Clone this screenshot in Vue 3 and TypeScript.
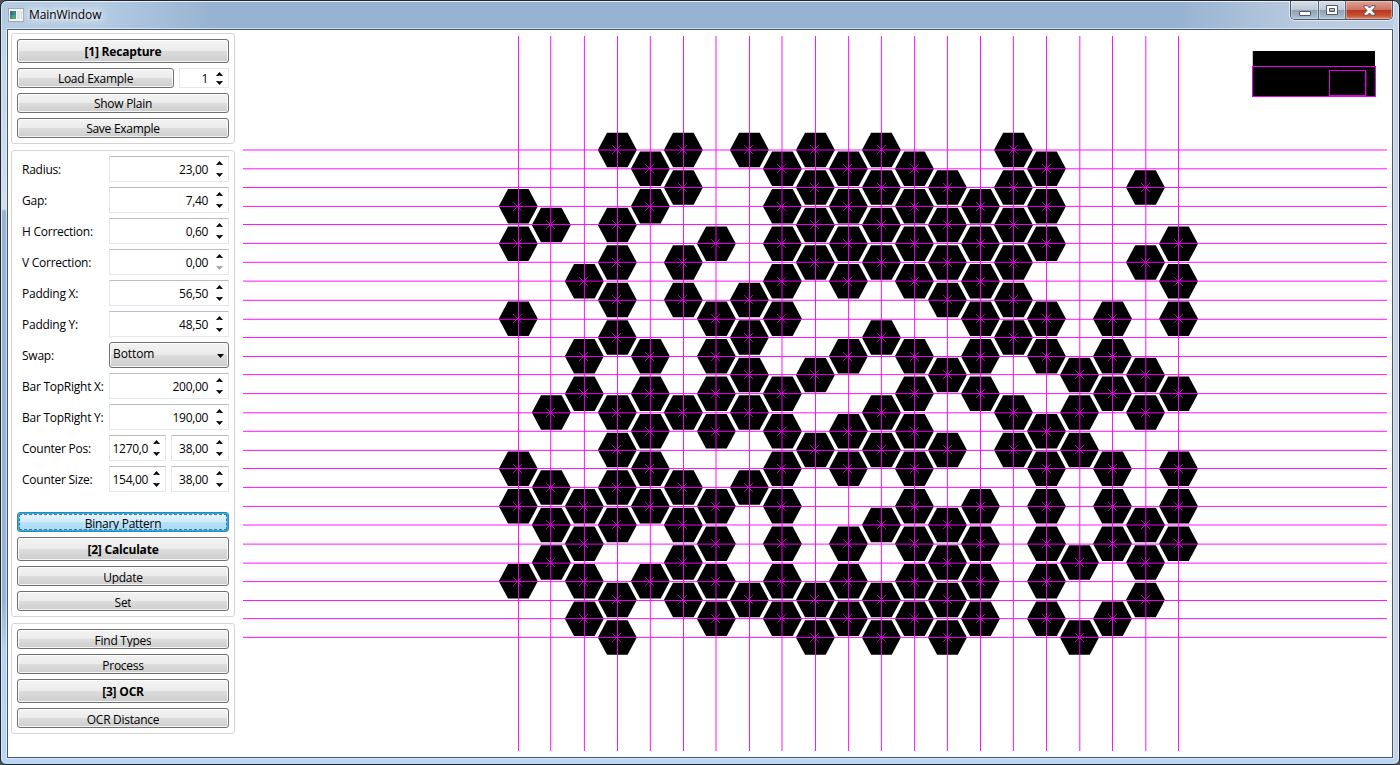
<script setup lang="ts">
interface Field {
  label: string
  values: string[]
  atMin?: boolean
  combo?: boolean
}

const fields: Field[] = [
  { label: 'Radius:', values: ['23,00'] },
  { label: 'Gap:', values: ['7,40'] },
  { label: 'H Correction:', values: ['0,60'] },
  { label: 'V Correction:', values: ['0,00'], atMin: true },
  { label: 'Padding X:', values: ['56,50'] },
  { label: 'Padding Y:', values: ['48,50'] },
  { label: 'Swap:', values: ['Bottom'], combo: true },
  { label: 'Bar TopRight X:', values: ['200,00'] },
  { label: 'Bar TopRight Y:', values: ['190,00'] },
  { label: 'Counter Pos:', values: ['1270,0', '38,00'] },
  { label: 'Counter Size:', values: ['154,00', '38,00'] },
]

// Centre of every grid line; whole numbers fall between two pixels and render soft.
const cols: number[] = [
  518.5, 550.7, 584.4, 617.5, 650.3, 683.5, 716, 749.5, 782, 815.5, 848.6,
  881.4, 914.6, 947.4, 980.5, 1013.4, 1046.5, 1079.8, 1112.5, 1145.8, 1178.5,
]
const rows: number[] = [
  150, 168.8, 187.5, 206.4, 224.5, 243.4, 262.3, 281.1, 300.3, 319.3, 337.5,
  356.5, 374.6, 393.6, 412.8, 431.3, 450.4, 468.5, 487.4, 506.4, 525, 544.1,
  563.1, 581.6, 600.5, 618.6, 637.4,
]

// Filled columns for each row of the pattern.
const filled: number[][] = [
  [3, 5, 7, 9, 11, 15],
  [4, 8, 10, 12, 16],
  [5, 9, 11, 13, 15, 19],
  [0, 4, 8, 10, 12, 14, 16],
  [1, 3, 9, 11, 13, 15],
  [0, 6, 8, 10, 12, 14, 16, 20],
  [3, 5, 9, 11, 13, 15, 19],
  [2, 8, 10, 12, 14, 20],
  [3, 5, 7, 13, 15],
  [0, 6, 8, 14, 16, 18, 20],
  [3, 7, 11, 15],
  [2, 4, 6, 10, 12, 14, 16, 18],
  [7, 9, 13, 17, 19],
  [2, 4, 6, 8, 12, 14, 18, 20],
  [1, 3, 5, 7, 11, 15, 17, 19],
  [4, 6, 8, 10, 12, 16],
  [3, 9, 11, 13, 15, 17],
  [0, 4, 8, 10, 12, 16, 18, 20],
  [1, 3, 5, 7],
  [0, 2, 4, 6, 8, 12, 14, 16, 18, 20],
  [1, 3, 5, 11, 13, 19],
  [2, 6, 8, 10, 12, 14, 16, 18, 20],
  [1, 5, 13, 17, 19],
  [0, 2, 4, 6, 8, 10, 12, 14, 16],
  [3, 5, 7, 9, 11, 13, 19],
  [2, 6, 8, 10, 12, 14, 16, 18],
  [3, 9, 11, 13, 17],
]

const cells = filled.flatMap((list, r) =>
  list.map((c) => ({ key: `${r}-${c}`, x: 518.3 + c * 33.01, y: 149.95 + r * 18.75 })),
)

function hex(x: number, y: number): string {
  const pts = [[-19.5, 0], [-10.3, -17.3], [10.3, -17.3], [19.5, 0], [10.3, 17.3], [-10.3, 17.3]]
  return pts.map(([dx, dy]) => `${(x + dx).toFixed(2)},${(y + dy).toFixed(2)}`).join(' ')
}

function cross(x: number, y: number): string {
  const cx = Math.floor(x - 0.4) + 0.5
  const cy = Math.floor(y) + 0.5
  return `M${cx - 4.5} ${cy - 4.5}l9 9M${cx + 4.5} ${cy - 4.5}l-9 9`
}
</script>

<template>
  <div class="window">
    <header class="titlebar">
      <svg class="app-icon" width="16" height="14" viewBox="0 0 16 14">
        <rect x="0.5" y="0.5" width="15" height="13" fill="#f4f4f4" stroke="#a3a9ad" />
        <rect x="2" y="3" width="6" height="8" fill="#3c8a86" />
        <rect x="2" y="3" width="3" height="4" fill="#3a6fa5" />
        <rect x="4" y="7" width="4" height="4" fill="#4ea573" />
        <rect x="9" y="3" width="3" height="8" fill="#e1e4e6" />
        <rect x="13" y="3" width="1" height="8" fill="#d0d5d8" />
      </svg>
      <span class="title">MainWindow</span>
      <div class="caption">
        <div class="cap min">
          <svg width="14" height="7" viewBox="0 0 14 7"><rect x="1.5" y="1.5" width="11" height="4" rx="0.5" fill="#fff" stroke="#535666" /></svg>
        </div>
        <div class="cap max">
          <svg width="12" height="10" viewBox="0 0 12 10"><path fill-rule="evenodd" d="M.5.5h11v9H.5zM3.500 3.500v3h5v-3z" fill="#fff" stroke="#535666" /></svg>
        </div>
        <div class="cap close">
          <svg width="13" height="11" viewBox="0 0 13 11"><path d="M1 .7h3.300L6.500 3 8.700.7H12v1.600L9 5.500l3 3.200v1.600H8.700L6.500 8l-2.200 2.300H1V8.700l3-3.200-3-3.200z" fill="#fff" stroke="#535666" /></svg>
        </div>
      </div>
    </header>

    <main class="client">
      <aside class="side">
        <section class="group">
          <button class="btn strong"><span>[1] Recapture</span></button>
          <div class="pair">
            <button class="btn load"><span>Load Example</span></button>
            <div class="spin short">
              <span>1</span>
              <svg class="arrows" width="7" height="13" viewBox="0 0 7 13"><path d="M0 4L3.500 0 7 4H5L3.500 3.500 2 4z" /><path d="M0 9L3.500 13 7 9H5L3.500 9.500 2 9z" /></svg>
            </div>
          </div>
          <button class="btn"><span>Show Plain</span></button>
          <button class="btn"><span>Save Example</span></button>
        </section>

        <section class="group">
          <div v-for="f in fields" :key="f.label" class="field">
            <label>{{ f.label }}</label>
            <div v-if="f.combo" class="combo">
              <span>{{ f.values[0] }}</span>
              <svg width="7" height="4" viewBox="0 0 7 4"><path d="M0 0h7L3.500 4z" /></svg>
            </div>
            <template v-else>
              <div v-for="(v, i) in f.values" :key="i" class="spin" :class="{ first: f.values.length > 1 && i === 0 }">
                <span>{{ v }}</span>
                <svg class="arrows" width="7" height="16" viewBox="0 0 7 16"><path d="M0 4L3.500 0 7 4H5L3.500 3.500 2 4z" /><path :class="{ off: f.atMin }" d="M0 12L3.500 16 7 12H5L3.500 12.500 2 12z" /></svg>
              </div>
            </template>
          </div>
          <button class="btn low focused"><span>Binary Pattern</span></button>
          <button class="btn strong"><span>[2] Calculate</span></button>
          <button class="btn low"><span>Update</span></button>
          <button class="btn low"><span>Set</span></button>
        </section>

        <section class="group">
          <button class="btn low"><span>Find Types</span></button>
          <button class="btn low"><span>Process</span></button>
          <button class="btn strong"><span>[3] OCR</span></button>
          <button class="btn low"><span>OCR Distance</span></button>
        </section>
      </aside>

      <svg class="canvas" width="1157" height="727" viewBox="235 30 1157 727">
        <polygon v-for="c in cells" :key="c.key" :points="hex(c.x, c.y)" />
        <g class="lines">
          <rect v-for="x in cols" :key="'c' + x" :x="x - 0.5" y="36" width="1" height="715" />
          <rect v-for="y in rows" :key="'r' + y" x="243" :y="y - 0.5" width="1144" height="1" />
        </g>
        <path v-for="c in cells" :key="'x' + c.key" class="mark" :d="cross(c.x, c.y)" />

        <rect x="1252" y="51" width="1" height="16" fill="#c4c4c4" />
        <rect x="1253" y="51" width="122" height="46" />
        <rect x="1252.500" y="66.500" width="123" height="30" fill="none" stroke="#e800e8" />
        <rect x="1329.500" y="70.500" width="36" height="25" fill="none" stroke="#e000e0" />
        <rect x="1366" y="71" width="1" height="25" fill="#5c005c" />
      </svg>
    </main>
  </div>
</template>

<style>
html,
body {
  background: #4b4f56;
}
</style>

<style scoped>
* {
  box-sizing: border-box;
}

.window {
  width: 1400px;
  height: 765px;
  padding: 0 6px 7px 6px;
  border: 1px solid #20242b;
  border-radius: 7px 7px 6px 6px;
  overflow: hidden;
  color: #000;
  font: 12px/16px 'Open Sans', 'Noto Sans', sans-serif;
  letter-spacing: -0.33px;
  background:
    linear-gradient(90deg, rgba(255, 255, 255, 0) 1392px, #c2d5ea 1392px) 0 0 / 100% 100% no-repeat,
    linear-gradient(90deg, #b5cbe2 0, #b4cbe3 100px, #98b3d1 210px, #98b3d1 1180px, #bccce0 1310px, #bccde1 100%) 0 0 / 100% 29px no-repeat,
    linear-gradient(#c0d2e5 0, #d3dfeb 208px, #9ab4d2 210px, #9ab4d2 600px, #b5d3f5 650px, #b9d6f8 100%);
  box-shadow: inset 0 1px 0 #e6f0fa, inset 1px 0 0 #d9e6f3, inset -1px 0 0 #e4eef8;
}

.titlebar {
  display: flex;
  align-items: center;
  height: 28px;
  padding-left: 1px;
}

.app-icon {
  flex: none;
}

.title {
  margin-left: 5px;
  letter-spacing: -0.08px;
  text-shadow: 0 0 6px #fff, 0 0 10px #fff, 0 0 14px #fff;
}

.caption {
  display: flex;
  align-self: flex-start;
  height: 19px;
  margin-left: auto;
  border: 1px solid #4c5364;
  border-top: 0;
  border-radius: 0 0 5px 5px;
  overflow: hidden;
  box-shadow: 0 0 0 1px rgba(235, 243, 251, 0.8);
}

.cap {
  display: flex;
  align-items: center;
  justify-content: center;
  width: 28px;
  border-right: 1px solid #5f687a;
  background: linear-gradient(#d8dfe9 0, #bdc8d7 48%, #8e9fb5 50%, #b0c1d4 100%);
  box-shadow: inset 0 0 0 1px rgba(255, 255, 255, 0.35);
}

.cap.min {
  padding-top: 6px;
}

.cap.max {
  width: 27px;
}

.cap.close {
  width: 46px;
  border-right: 0;
  background: linear-gradient(#e0a294 0, #cd7463 48%, #b53420 50%, #c9512f 80%, #dc8265 100%);
}

.client {
  display: flex;
  width: 1386px;
  height: 729px;
  border: 1px solid #4b5663;
  background: #fff;
  box-shadow: 0 0 0 1px rgba(225, 238, 250, 0.75);
}

.side {
  flex: none;
  display: flex;
  flex-direction: column;
  gap: 6px;
  width: 227px;
  padding: 3px 0 0 3px;
}

.group {
  display: flex;
  flex-direction: column;
  gap: 5px;
  padding: 5px;
  border: 1px solid #d5d5d5;
  border-radius: 3px;
}

.btn {
  display: flex;
  justify-content: center;
  width: 212px;
  height: 20px;
  padding: 2px 0 0;
  border: 1px solid #707070;
  border-radius: 3px;
  color: #000;
  font: inherit;
  letter-spacing: -0.27px;
  background: linear-gradient(#f3f3f3 0, #ebebeb 50%, #dddddd 50%, #cdcdcd 100%);
  box-shadow: inset 0 0 0 1px rgba(255, 255, 255, 0.8);
}

.btn span {
  height: 16px;
}

.btn.low {
  padding-top: 3px;
}

.btn.low span {
  height: 14px;
  overflow: hidden;
}

.btn.strong {
  height: 24px;
  padding-top: 4px;
  font-weight: 700;
  letter-spacing: -0.2px;
}

.btn.focused {
  position: relative;
  border-color: #3c7fb1;
  background: linear-gradient(#e4f3fb 0, #d2ecfa 50%, #b8e2f8 50%, #a5daf5 100%);
  box-shadow: inset 0 0 0 1px #18b9ee;
}

.btn.focused::after {
  position: absolute;
  inset: 1px;
  border: 1px dashed #4f7386;
  content: '';
}

.pair {
  display: flex;
  gap: 5px;
}

.btn.load {
  width: 157px;
}

.spin {
  flex: 1;
  display: flex;
  align-items: center;
  justify-content: flex-end;
  height: 26px;
  padding-right: 5px;
  border: 1px solid #e2e6ee;
  border-top-color: #b9bcc6;
  background: #fff;
}

.spin span {
  padding-top: 2px;
}

.spin.first {
  flex: none;
  width: 57px;
  margin-right: 5px;
}

.spin.short {
  height: 20px;
  border-top-color: #dfe2ea;
}

.arrows {
  margin-left: 8px;
}

.spin.first .arrows {
  margin-left: 5px;
}

.off {
  fill: #a3a3a3;
}

.field {
  display: flex;
  align-items: center;
}

.field label {
  width: 92px;
  padding: 2px 0 0 5px;
  white-space: nowrap;
  letter-spacing: -0.25px;
}

.combo {
  flex: 1;
  display: flex;
  align-items: center;
  justify-content: space-between;
  height: 26px;
  padding: 0 4px 0 3px;
  border: 1px solid #707070;
  border-radius: 3px;
  background: linear-gradient(#f3f3f3 0, #ebebeb 50%, #dddddd 50%, #cdcdcd 100%);
  box-shadow: inset 0 0 0 1px rgba(255, 255, 255, 0.8);
}

.combo span {
  margin-top: -2px;
  letter-spacing: -0.1px;
}

.combo svg {
  margin-top: 2px;
}

.focused {
  margin-top: 15px;
}

.canvas {
  flex: none;
  display: block;
}

.lines {
  fill: #f0f;
  fill-opacity: 0.92;
}

.mark {
  fill: none;
  stroke: #e800e8;
  stroke-opacity: 0.8;
  stroke-width: 1;
}
</style>
